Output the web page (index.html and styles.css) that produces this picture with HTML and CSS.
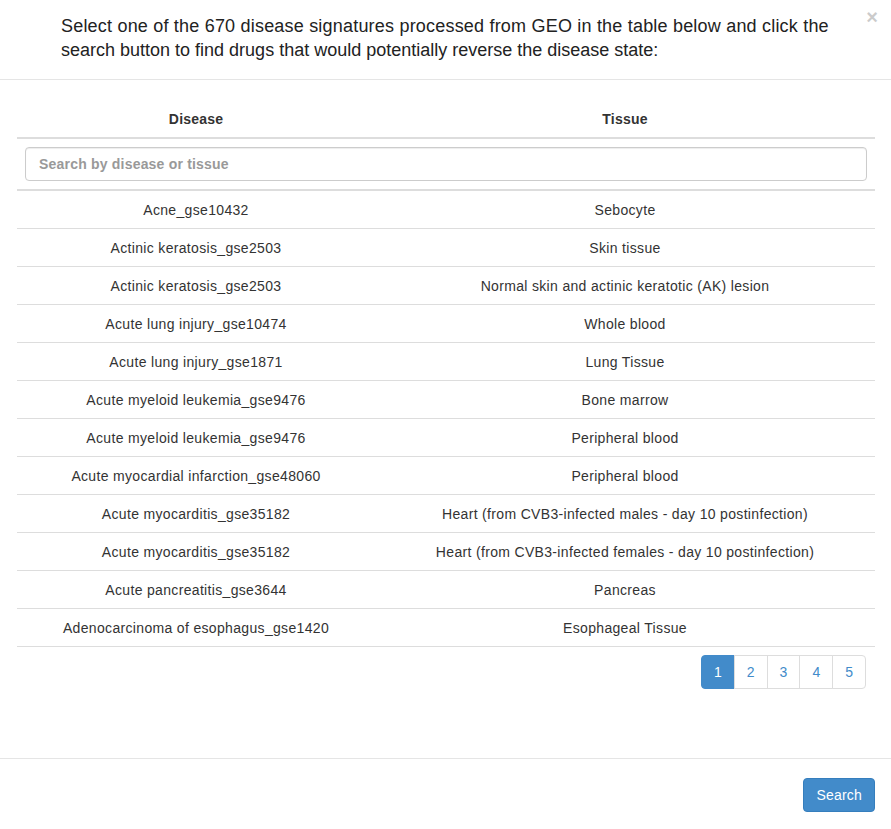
FILE: index.html
```html
<!DOCTYPE html>
<html>
<head>
<meta charset="utf-8">
<link rel="stylesheet" href="styles.css">
</head>
<body>
<div class="modal">
  <div class="modal-header">
    <button class="close" type="button">×</button>
    <h4 class="modal-title"><span class="title-line1">Select one of the 670 disease signatures processed from GEO in the table below and click the</span><br>search button to find drugs that would potentially reverse the disease state:</h4>
  </div>
  <div class="modal-body">
    <table class="sig-table">
      <thead>
        <tr><th class="col-disease">Disease</th><th>Tissue</th></tr>
        <tr class="search-row"><td colspan="2"><input class="search-input" type="text" placeholder="Search by disease or tissue"></td></tr>
      </thead>
      <tbody>
        <tr><td>Acne_gse10432</td><td>Sebocyte</td></tr>
        <tr><td>Actinic keratosis_gse2503</td><td>Skin tissue</td></tr>
        <tr><td>Actinic keratosis_gse2503</td><td>Normal skin and actinic keratotic (AK) lesion</td></tr>
        <tr><td>Acute lung injury_gse10474</td><td>Whole blood</td></tr>
        <tr><td>Acute lung injury_gse1871</td><td>Lung Tissue</td></tr>
        <tr><td>Acute myeloid leukemia_gse9476</td><td>Bone marrow</td></tr>
        <tr><td>Acute myeloid leukemia_gse9476</td><td>Peripheral blood</td></tr>
        <tr><td>Acute myocardial infarction_gse48060</td><td>Peripheral blood</td></tr>
        <tr><td>Acute myocarditis_gse35182</td><td>Heart (from CVB3-infected males - day 10 postinfection)</td></tr>
        <tr><td>Acute myocarditis_gse35182</td><td>Heart (from CVB3-infected females - day 10 postinfection)</td></tr>
        <tr><td>Acute pancreatitis_gse3644</td><td>Pancreas</td></tr>
        <tr><td>Adenocarcinoma of esophagus_gse1420</td><td>Esophageal Tissue</td></tr>
      </tbody>
    </table>
    <div class="pager-wrap">
      <ul class="pagination">
        <li class="active"><a>1</a></li>
        <li><a>2</a></li>
        <li><a>3</a></li>
        <li><a>4</a></li>
        <li><a>5</a></li>
      </ul>
    </div>
  </div>
  <div class="modal-footer">
    <button class="btn-primary" type="button">Search</button>
  </div>
</div>
</body>
</html>
```
FILE: styles.css
```css
* { box-sizing: border-box; }
html, body {
  margin: 0;
  padding: 0;
  background: #fff;
}
body {
  font-family: "Liberation Sans", Arial, sans-serif;
  font-size: 14px;
  line-height: 20px;
  color: #333;
}
.modal {
  position: relative;
  width: 891px;
}
.modal-header {
  position: relative;
  padding: 14px 30px 17px 61px;
  border-bottom: 1px solid #e5e5e5;
}
.modal-title {
  margin: 0;
  font-size: 18px;
  line-height: 24px;
  font-weight: normal;
  color: #222;
}
.title-line1 {
  letter-spacing: 0.2px;
}
.close {
  position: absolute;
  top: 7px;
  right: 13px;
  padding: 0;
  border: 0;
  background: transparent;
  font-family: "Liberation Sans", Arial, sans-serif;
  font-size: 20px;
  font-weight: bold;
  line-height: 20px;
  color: #000;
  opacity: 0.2;
}
.modal-body {
  padding: 21px 16px 0 17px;
}
.sig-table {
  width: 100%;
  border-collapse: collapse;
  border-spacing: 0;
}
.sig-table th {
  padding: 8px;
  line-height: 20px;
  font-weight: bold;
  letter-spacing: 0.2px;
  text-align: center;
  border-bottom: 2px solid #ddd;
}
.col-disease { width: 358px; }
.search-row td {
  padding: 8px;
  border-bottom: 2px solid #ddd;
}
.search-input {
  display: block;
  width: 100%;
  height: 34px;
  padding: 6px 13px;
  border: 1px solid #ccc;
  border-radius: 4px;
  font-family: "Liberation Sans", Arial, sans-serif;
  font-size: 14px;
  letter-spacing: 0.2px;
  color: #555;
  box-shadow: inset 0 1px 1px rgba(0,0,0,.075);
}
.search-input::placeholder {
  color: #999;
  font-weight: bold;
}
.sig-table tbody td {
  padding: 9px 8px 7px;
  line-height: 21px;
  letter-spacing: 0.33px;
  text-align: center;
  border-top: 1px solid #ddd;
}
.sig-table tbody tr:last-child td {
  border-bottom: 1px solid #ddd;
}
.pager-wrap {
  display: flex;
  justify-content: flex-end;
  padding: 8px 9px 0 0;
}
.pagination {
  display: flex;
  margin: 0;
  padding: 0;
  list-style: none;
}
.pagination li a {
  display: block;
  padding: 6px 12px;
  line-height: 20px;
  margin-left: -1px;
  color: #428bca;
  background: #fff;
  border: 1px solid #ddd;
}
.pagination li:first-child a {
  margin-left: 0;
  border-radius: 4px 0 0 4px;
}
.pagination li:last-child a {
  border-radius: 0 4px 4px 0;
}
.pagination li.active a {
  color: #fff;
  background: #428bca;
  border-color: #428bca;
}
.modal-footer {
  margin-top: 69px;
  padding: 19px 16px 18px 16px;
  border-top: 1px solid #e5e5e5;
  display: flex;
  justify-content: flex-end;
}
.btn-primary {
  height: 34px;
  padding: 6px 12px;
  font-family: "Liberation Sans", Arial, sans-serif;
  font-size: 14px;
  line-height: 20px;
  letter-spacing: 0.2px;
  color: #fff;
  background: #428bca;
  border: 1px solid #357ebd;
  border-radius: 4px;
}
```
